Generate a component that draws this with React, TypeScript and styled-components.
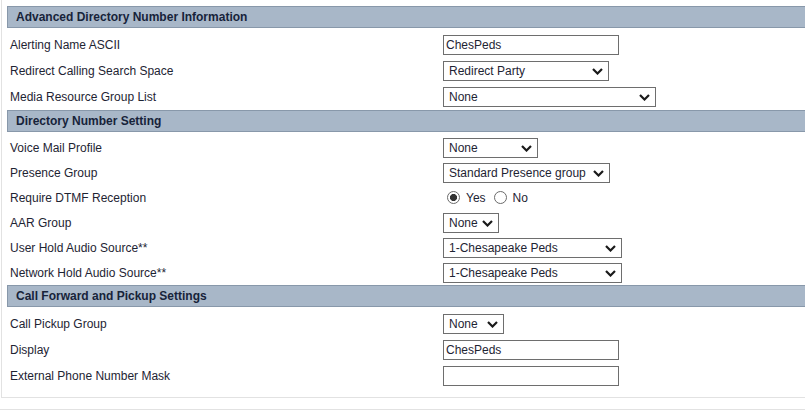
import React from 'react';
import styled, { createGlobalStyle } from 'styled-components';

const GlobalStyle = createGlobalStyle`
  html, body {
    margin: 0;
    padding: 0;
    background: #ffffff;
    overflow: hidden;
  }
  body {
    font-family: 'Liberation Sans', Arial, sans-serif;
    font-size: 12px;
    color: #1e2433;
  }
`;

const Panel = styled.div`
  margin-left: 1px;
  border-left: 1px solid #e2e2e2;
  border-bottom: 1px solid #e2e2e2;
  padding: 6px 0 8px 5px;
`;

const SectionHeader = styled.div`
  height: 20px;
  display: flex;
  align-items: center;
  padding-left: 8px;
  background: #a8b7c8;
  border-top: 1px solid #8898aa;
  border-bottom: 1px solid #8898aa;
  border-left: 1px solid #8898aa;
  font-weight: bold;
  font-size: 12px;
  color: #17233a;
`;

const SectionBody = styled.div<{ $pad: number }>`
  padding-top: ${(p) => p.$pad}px;
`;

const Row = styled.div<{ $h: number }>`
  display: grid;
  grid-template-columns: 436px 1fr;
  align-items: center;
  height: ${(p) => p.$h}px;
`;

const Label = styled.div`
  padding-left: 3px;
  color: #1e2433;
`;

const TextInput = styled.input`
  box-sizing: border-box;
  width: 176px;
  height: 20px;
  margin: 0;
  padding: 0 2px;
  border: 1px solid #6e6e6e;
  font-family: 'Liberation Sans', Arial, sans-serif;
  font-size: 12px;
  color: #1e2433;
  background: #fff;
  outline: none;
`;

const SelectWrap = styled.div<{ $w: number }>`
  position: relative;
  width: ${(p) => p.$w}px;
  height: 20px;
`;

const Select = styled.select`
  appearance: none;
  box-sizing: border-box;
  width: 100%;
  height: 20px;
  margin: 0;
  padding: 0 0 0 5px;
  border: 1px solid #6e6e6e;
  border-radius: 0;
  background: #fff;
  font-family: 'Liberation Sans', Arial, sans-serif;
  font-size: 12px;
  color: #1e2433;
  outline: none;
`;

const Chevron = styled.svg`
  position: absolute;
  right: 6px;
  top: 7px;
  pointer-events: none;
`;

const RadioGroup = styled.div`
  display: flex;
  align-items: center;
  padding-left: 4px;
`;

const RadioLabel = styled.label`
  display: flex;
  align-items: center;
  margin-right: 8px;
  color: #1e2433;
`;

const Radio = styled.input`
  appearance: none;
  box-sizing: border-box;
  width: 13px;
  height: 13px;
  margin: 0 6px 0 0;
  border: 1px solid #6b6b6b;
  border-radius: 50%;
  background: #fff;
  &:checked {
    background: radial-gradient(circle, #333 0 3.3px, #fff 3.8px);
  }
`;

const Footer = styled.div`
  margin-top: 11px;
  border-top: 1px solid #e2e2e2;
  height: 10px;
`;

type Field =
  | { label: string; kind: 'text'; value: string }
  | { label: string; kind: 'select'; value: string; width: number }
  | { label: string; kind: 'radio' };

interface Section {
  title: string;
  pad: number;
  rowHeight: number;
  fields: Field[];
}

const sections: Section[] = [
  {
    title: 'Advanced Directory Number Information',
    pad: 4,
    rowHeight: 26,
    fields: [
      { label: 'Alerting Name ASCII', kind: 'text', value: 'ChesPeds' },
      { label: 'Redirect Calling Search Space', kind: 'select', value: 'Redirect Party', width: 166 },
      { label: 'Media Resource Group List', kind: 'select', value: 'None', width: 213 },
    ],
  },
  {
    title: 'Directory Number Setting',
    pad: 3,
    rowHeight: 25,
    fields: [
      { label: 'Voice Mail Profile', kind: 'select', value: 'None', width: 95 },
      { label: 'Presence Group', kind: 'select', value: 'Standard Presence group', width: 167 },
      { label: 'Require DTMF Reception', kind: 'radio' },
      { label: 'AAR Group', kind: 'select', value: 'None', width: 56 },
      { label: 'User Hold Audio Source**', kind: 'select', value: '1-Chesapeake Peds', width: 179 },
      { label: 'Network Hold Audio Source**', kind: 'select', value: '1-Chesapeake Peds', width: 179 },
    ],
  },
  {
    title: 'Call Forward and Pickup Settings',
    pad: 4,
    rowHeight: 26,
    fields: [
      { label: 'Call Pickup Group', kind: 'select', value: 'None', width: 61 },
      { label: 'Display', kind: 'text', value: 'ChesPeds' },
      { label: 'External Phone Number Mask', kind: 'text', value: '' },
    ],
  },
];

const DropDown: React.FC<{ value: string; width: number }> = ({ value, width }) => (
  <SelectWrap $w={width}>
    <Select defaultValue={value}>
      <option>{value}</option>
    </Select>
    <Chevron width="11" height="7" viewBox="0 0 11 7">
      <path d="M1 1 L5.5 5.5 L10 1" fill="none" stroke="#1a1a1a" strokeWidth="2.2" />
    </Chevron>
  </SelectWrap>
);

const Control: React.FC<{ field: Field }> = ({ field }) => {
  if (field.kind === 'text') {
    return <TextInput type="text" defaultValue={field.value} />;
  }
  if (field.kind === 'select') {
    return <DropDown value={field.value} width={field.width} />;
  }
  return (
    <RadioGroup>
      <RadioLabel>
        <Radio type="radio" name="dtmf" defaultChecked />
        Yes
      </RadioLabel>
      <RadioLabel>
        <Radio type="radio" name="dtmf" />
        No
      </RadioLabel>
    </RadioGroup>
  );
};

export default function App() {
  return (
    <>
      <GlobalStyle />
      <Panel>
        {sections.map((s) => (
          <div key={s.title}>
            <SectionHeader>{s.title}</SectionHeader>
            <SectionBody $pad={s.pad}>
              {s.fields.map((f) => (
                <Row key={f.label} $h={s.rowHeight}>
                  <Label>{f.label}</Label>
                  <div>
                    <Control field={f} />
                  </div>
                </Row>
              ))}
            </SectionBody>
          </div>
        ))}
      </Panel>
      <Footer />
    </>
  );
}
